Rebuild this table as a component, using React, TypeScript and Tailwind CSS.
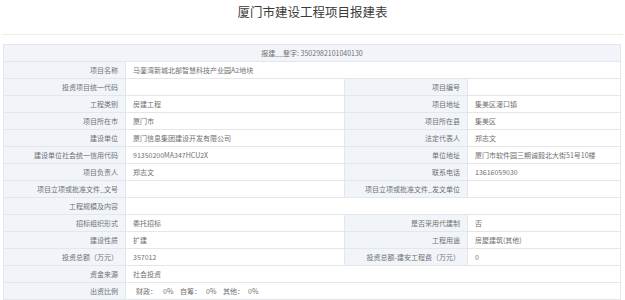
import { FC, ReactNode } from "react";

type Pair = [string, ReactNode];

const Label: FC<{ children?: ReactNode }> = ({ children }) => (
  <div className="bg-[#f1f5fa] h-[16px] flex items-center justify-end pr-[7px] whitespace-nowrap">
    {children}
  </div>
);

const Value: FC<{ children?: ReactNode; wide?: boolean }> = ({ children, wide }) => (
  <div
    className={`bg-white h-[16px] flex items-center pl-[7px] whitespace-nowrap ${
      wide ? "col-span-3" : ""
    }`}
  >
    {children}
  </div>
);

const rows: (Pair | [Pair, Pair])[] = [
  ["项目名称", "马銮湾新城北部智慧科技产业园A2地块"],
  [
    ["投资项目统一代码", ""],
    ["项目编号", ""],
  ],
  [
    ["工程类别", "房建工程"],
    ["项目地址", "集美区灌口镇"],
  ],
  [
    ["项目所在市", "厦门市"],
    ["项目所在县", "集美区"],
  ],
  [
    ["建设单位", "厦门信息集团建设开发有限公司"],
    ["法定代表人", "郑志文"],
  ],
  [
    ["建设单位社会统一信用代码", "91350200MA347HCU2X"],
    ["单位地址", "厦门市软件园三期诚毅北大街51号10楼"],
  ],
  [
    ["项目负责人", "郑志文"],
    ["联系电话", "13616059030"],
  ],
  [
    ["项目立项或批准文件_文号", ""],
    ["项目立项或批准文件_发文单位", ""],
  ],
  ["工程规模及内容", ""],
  [
    ["招标组织形式", "委托招标"],
    ["是否采用代建制", "否"],
  ],
  [
    ["建设性质", "扩建"],
    ["工程用途", "房屋建筑(其他)"],
  ],
  [
    ["投资总额（万元）", "357012"],
    ["投资总额-建安工程费（万元）", "0"],
  ],
  ["资金来源", "社会投资"],
  [
    "出资比例",
    <span className="flex">
      <span className="w-[27px] ml-[3px]">财政：</span>
      <span className="w-[17px]">0%</span>
      <span className="w-[26px]">自筹：</span>
      <span className="w-[17px]">0%</span>
      <span className="w-[25px]">其他：</span>
      <span>0%</span>
    </span>,
  ],
];

export default function App() {
  return (
    <div className="w-[625px] h-[300px] overflow-hidden bg-white text-[#707070] font-['Noto_Sans_CJK_SC','Noto_Sans',sans-serif]">
      <div className="mx-[2px] h-[35px] border-b border-[#ececec] pt-[4px] text-center text-[12.5px] leading-[16px] text-[#3a3a3a]">
        厦门市建设工程项目报建表
      </div>
      <div className="mt-[9px] ml-[3px] w-[618px] border border-[#e3e6ea] bg-[#e3e6ea] grid grid-cols-[121px_218px_122px_152px] gap-px text-[7px]">
        <div className="col-span-4 bg-[#f1f5fa] h-[16px] flex items-center justify-center">
          报建__登字: 3502982101040130
        </div>
        {rows.map((row, i) => {
          if (Array.isArray(row[0])) {
            const [a, b] = row as [Pair, Pair];
            return [
              <Label key={`${i}a`}>{a[0]}</Label>,
              <Value key={`${i}b`}>{a[1]}</Value>,
              <Label key={`${i}c`}>{b[0]}</Label>,
              <Value key={`${i}d`}>{b[1]}</Value>,
            ];
          }
          const [l, v] = row as Pair;
          return [
            <Label key={`${i}a`}>{l}</Label>,
            <Value key={`${i}b`} wide>
              {v}
            </Value>,
          ];
        })}
      </div>
    </div>
  );
}
